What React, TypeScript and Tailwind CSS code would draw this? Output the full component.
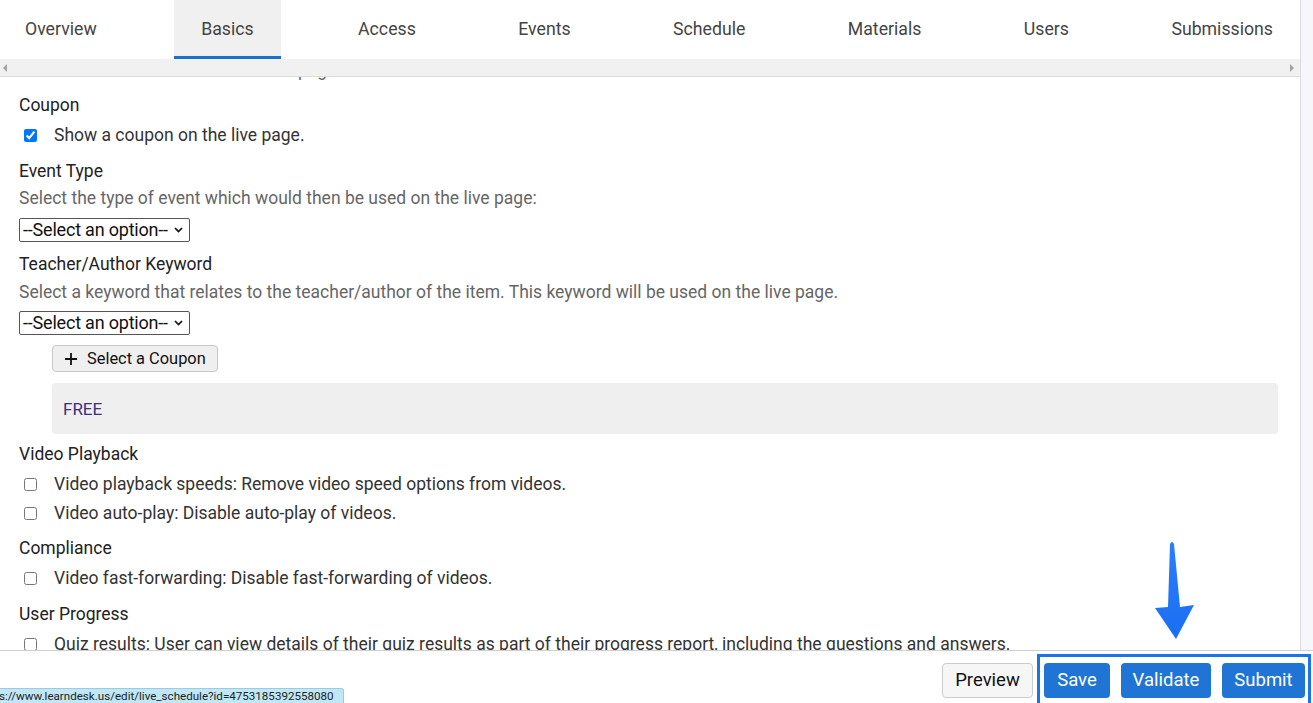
import React from "react";

const tabs = ["Overview", "Basics", "Access", "Events", "Schedule", "Materials", "Users", "Submissions"];

function Check({ checked, label }: { checked?: boolean; label: string }) {
  return (
    <div className="flex items-center h-[24px] pl-[5px] whitespace-nowrap">
      <input
        type="checkbox"
        defaultChecked={checked}
        className="w-[13px] h-[13px] m-0 shrink-0"
      />
      <span className="ml-[17px] text-[17.5px] text-[#333]">{label}</span>
    </div>
  );
}

function FakeSelect() {
  return (
    <div className="w-[171px] h-[24px] border border-[#555] rounded-[2px] flex items-center justify-between pl-[3px] pr-[6px] text-[18px] text-[#111] bg-white">
      <span className="tracking-[-0.2px]">--Select an option--</span>
      <svg width="9" height="6" viewBox="0 0 9 6">
        <path d="M1 1 L4.5 4.5 L8 1" stroke="#111" strokeWidth="1.7" fill="none" />
      </svg>
    </div>
  );
}

export default function App() {
  return (
    <div className="relative w-[1313px] h-[703px] overflow-hidden bg-white font-['Roboto',sans-serif]">
      <div className="flex h-[650px]">
        <div className="w-[1300px] flex flex-col overflow-hidden">
          {/* tabs */}
          <div className="h-[59px] flex justify-between shrink-0 pr-[2px]">
            {tabs.map((t) => (
              <div
                key={t}
                className={`h-[59px] px-[25px] flex items-center text-[17.7px] text-[#444] ${
                  t === "Basics" ? "bg-[#f0f0f0] border-b-[3px] border-[#1a6fd0] pt-[3px] px-[27px]" : ""
                }`}
              >
                {t}
              </div>
            ))}
          </div>
          {/* horizontal scrollbar */}
          <div className="h-[18px] shrink-0 bg-[#f1f1f1] border-b border-[#dcdcdc] flex items-center justify-between px-[3px]">
            <svg width="5" height="8" viewBox="0 0 5 8">
              <path d="M4 0 L0 4 L4 8 Z" fill="#a3a3a3" />
            </svg>
            <svg width="5" height="8" viewBox="0 0 5 8" className="mr-[3px]">
              <path d="M1 0 L5 4 L1 8 Z" fill="#a3a3a3" />
            </svg>
          </div>
          {/* content */}
          <div className="flex-1 overflow-hidden pl-[19px] pr-[22px] text-[17.5px] leading-[24px]">
            <div className="-mt-[19px] text-[#666] whitespace-nowrap">
              Select the items to show on the live page.
            </div>
            <div className="mt-[11px] text-[#222]">Coupon</div>
            <div className="mt-[6px]">
              <Check checked label="Show a coupon on the live page." />
            </div>
            <div className="mt-[12px] text-[#222]">Event Type</div>
            <div className="mt-[3px] text-[#666]">
              Select the type of event which would then be used on the live page:
            </div>
            <div className="mt-[8px]">
              <FakeSelect />
            </div>
            <div className="mt-[10px] text-[#222]">Teacher/Author Keyword</div>
            <div className="mt-[4px] text-[#666]">
              Select a keyword that relates to the teacher/author of the item. This keyword will be used on the live page.
            </div>
            <div className="mt-[7px]">
              <FakeSelect />
            </div>
            <div className="mt-[10px] ml-[33px]">
              <button className="h-[27px] w-[166px] flex items-center bg-[#efefef] border border-[#c8c8c8] rounded-[4px] pl-[11px] text-[16.4px] text-[#111]">
                <svg width="14" height="14" viewBox="0 0 14 14">
                  <path d="M7 1 V13 M1 7 H13" stroke="#111" strokeWidth="1.8" />
                </svg>
                <span className="ml-[9px]">Select a Coupon</span>
              </button>
            </div>
            <div className="mt-[11px] ml-[33px] h-[51px] bg-[#efefef] rounded-[4px] flex items-center pl-[11px] text-[17px] text-[#3b3080]">
              FREE
            </div>
            <div className="mt-[8px] text-[#222]">Video Playback</div>
            <div className="mt-[6px]">
              <Check label="Video playback speeds: Remove video speed options from videos." />
            </div>
            <div className="mt-[5px]">
              <Check label="Video auto-play: Disable auto-play of videos." />
            </div>
            <div className="mt-[11px] text-[#222]">Compliance</div>
            <div className="mt-[6px]">
              <Check label="Video fast-forwarding: Disable fast-forwarding of videos." />
            </div>
            <div className="mt-[12px] text-[#222]">User Progress</div>
            <div className="mt-[6px]">
              <Check label="Quiz results: User can view details of their quiz results as part of their progress report, including the questions and answers." />
            </div>
          </div>
        </div>
        {/* vertical scrollbar */}
        <div className="w-[13px] bg-[#f7f7fb] border-l border-[#dcdcdc]" />
      </div>

      {/* footer */}
      <div className="h-[53px] border-t border-[#cfcfcf] flex justify-end items-start pr-[2px]">
        <button className="mt-[12px] w-[91px] h-[35px] bg-[#f6f6f6] border border-[#cccccc] rounded-[4px] text-[18.5px] text-[#111]">
          Preview
        </button>
        <div className="mt-[3px] ml-[4px] h-[56px] border-[3px] border-[#1a73e8] flex items-start gap-[11px] pt-[6px] pl-[4px] pr-[3px]">
          <button className="w-[66px] h-[35px] bg-[#1f74d4] rounded-[4px] text-[18.5px] text-white">Save</button>
          <button className="w-[90px] h-[35px] bg-[#1f74d4] rounded-[4px] text-[18.5px] text-white">Validate</button>
          <button className="w-[83px] h-[35px] bg-[#1f74d4] rounded-[4px] text-[18.5px] text-white">Submit</button>
        </div>
      </div>

      {/* annotation arrow */}
      <svg className="absolute left-[1150px] top-[536px]" width="50" height="108" viewBox="0 0 50 108">
        <defs>
          <linearGradient id="ag" x1="0" y1="0" x2="0" y2="1">
            <stop offset="0" stopColor="#2b7dff" />
            <stop offset="1" stopColor="#1a6ff0" />
          </linearGradient>
        </defs>
        <path
          d="M20 8 Q22 4 24 8 L30 71 L44 69 L26 103 L5 72 L18 71 Z"
          fill="url(#ag)"
        />
      </svg>

      {/* status bar */}
      <div className="absolute left-0 bottom-0 w-[344px] h-[15px] bg-[#bfe7f6] border-t border-r border-[#9ccbe0] rounded-tr-[3px] overflow-hidden whitespace-nowrap text-[11.6px] leading-[15px] text-[#222] font-['Roboto',sans-serif]">
        <span className="inline-block -ml-[1px]">s://www.learndesk.us/edit/live_schedule?id=4753185392558080</span>
      </div>
    </div>
  );
}
